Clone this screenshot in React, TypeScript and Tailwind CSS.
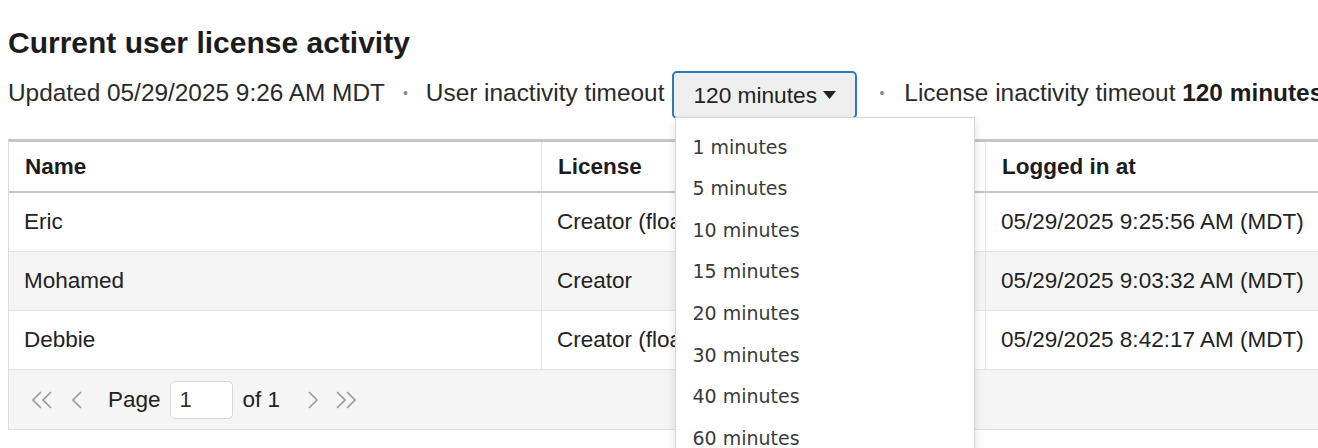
const rows = [
  { name: 'Eric', license: 'Creator (floating)', logged: '05/29/2025 9:25:56 AM (MDT)' },
  { name: 'Mohamed', license: 'Creator', logged: '05/29/2025 9:03:32 AM (MDT)' },
  { name: 'Debbie', license: 'Creator (floating)', logged: '05/29/2025 8:42:17 AM (MDT)' },
];

const options = ['1', '5', '10', '15', '20', '30', '40', '60', '90', '120'];

function Chevron({ dir, double }: { dir: 'left' | 'right'; double?: boolean }) {
  const w = double ? 22 : 12;
  const one = (x: number) =>
    dir === 'left' ? `M${x + 9} 1 L${x + 1} 9 L${x + 9} 17` : `M${x + 1} 1 L${x + 9} 9 L${x + 1} 17`;
  return (
    <svg width={w} height={18} viewBox={`0 0 ${w} 18`} fill="none" stroke="#9b9b9b" strokeWidth={1.7}>
      <path d={one(0)} />
      {double && <path d={one(10)} />}
    </svg>
  );
}

export default function App() {
  return (
    <div className="h-[448px] w-[1318px] overflow-hidden bg-white text-[#222] font-['Liberation_Sans',Arial,sans-serif]">
      <div className="px-2 pt-[26px]">
        <h1 className="text-[30px] leading-[34px] font-bold text-[#1c1c1c]">Current user license activity</h1>

        {/* Status line */}
        <div className="mt-[11px] flex h-[48px] items-center whitespace-nowrap text-[24.4px] text-[#2a2a2a]">
          <span className="mb-[3px]">Updated 05/29/2025 9:26 AM MDT</span>
          <span className="mx-[18px] mb-[3px] text-[14px] text-[#8a8a8a]">•</span>
          <span className="mb-[3px]">User inactivity timeout</span>
          <div className="relative ml-[8px]">
            <button className="flex h-[48px] w-[185px] items-center rounded-[5px] border-2 border-[#2b7bb4] bg-[#efefef] pl-[19px] text-[22.7px] text-[#222]">
              120 minutes
              <svg className="ml-[6px] h-[8px] w-[13px]" viewBox="0 0 13 8">
                <path d="M0 0 H13 L6.5 8 Z" fill="#222" />
              </svg>
            </button>
            {/* Open dropdown menu */}
            <div className="absolute left-[3px] top-[46px] z-10 w-[300px] border border-[#d4d4d4] bg-white pt-[8px] shadow-[0_4px_10px_rgba(0,0,0,0.12)] font-['DejaVu_Sans',sans-serif]">
              {options.map((o) => (
                <div key={o} className="flex h-[41.6px] items-center pl-[16px] text-[19px] text-[#3a3a3a]">
                  {o} minutes
                </div>
              ))}
            </div>
          </div>
          <span className="mb-[3px] ml-[22px] mr-[20px] text-[14px] text-[#8a8a8a]">•</span>
          <span className="mb-[3px]">
            License inactivity timeout <b className="font-bold text-[#1c1c1c]">120 minutes</b>
          </span>
        </div>

        {/* Table */}
        <div className="mt-[20px] w-[1340px] border-l border-t-[3px] border-l-[#dddddd] border-t-[#c6c6c6] text-[22.5px]">
          <div className="flex h-[51px] items-center border-b-2 border-[#c4c4c4] font-bold text-[#1c1c1c]">
            <div className="flex h-full w-[533px] items-center border-r border-[#e4e4e4] pl-[16px]">Name</div>
            <div className="flex h-full w-[444px] items-center border-r border-[#e4e4e4] pl-[16px]">License</div>
            <div className="flex h-full flex-1 items-center pl-[16px]">Logged in at</div>
          </div>
          {rows.map((r, i) => (
            <div
              key={r.name}
              className={`flex h-[59px] items-center border-b border-[#e4e4e4] ${i === 1 ? 'bg-[#f5f5f5]' : 'bg-white'}`}
            >
              <div className="flex h-full w-[533px] items-center border-r border-[#e4e4e4] pl-[15px]">{r.name}</div>
              <div className="flex h-full w-[444px] items-center border-r border-[#e4e4e4] pl-[15px]">{r.license}</div>
              <div className="flex h-full flex-1 items-center pl-[15px]">{r.logged}</div>
            </div>
          ))}
          {/* Pagination */}
          <div className="flex h-[60px] items-center border-b border-[#dddddd] bg-[#f5f5f5] pl-[23px]">
            <Chevron dir="left" double />
            <span className="ml-[18px] flex">
              <Chevron dir="left" />
            </span>
            <span className="ml-[24px]">Page</span>
            <input
              readOnly
              value="1"
              className="ml-[9px] h-[38px] w-[63px] rounded-[5px] border border-[#d8d8d8] bg-white pl-[9px] text-[22px] text-[#333] outline-none"
            />
            <span className="ml-[10px]">of 1</span>
            <span className="ml-[28px] flex">
              <Chevron dir="right" />
            </span>
            <span className="ml-[16px] flex">
              <Chevron dir="right" double />
            </span>
          </div>
        </div>
      </div>
    </div>
  );
}
